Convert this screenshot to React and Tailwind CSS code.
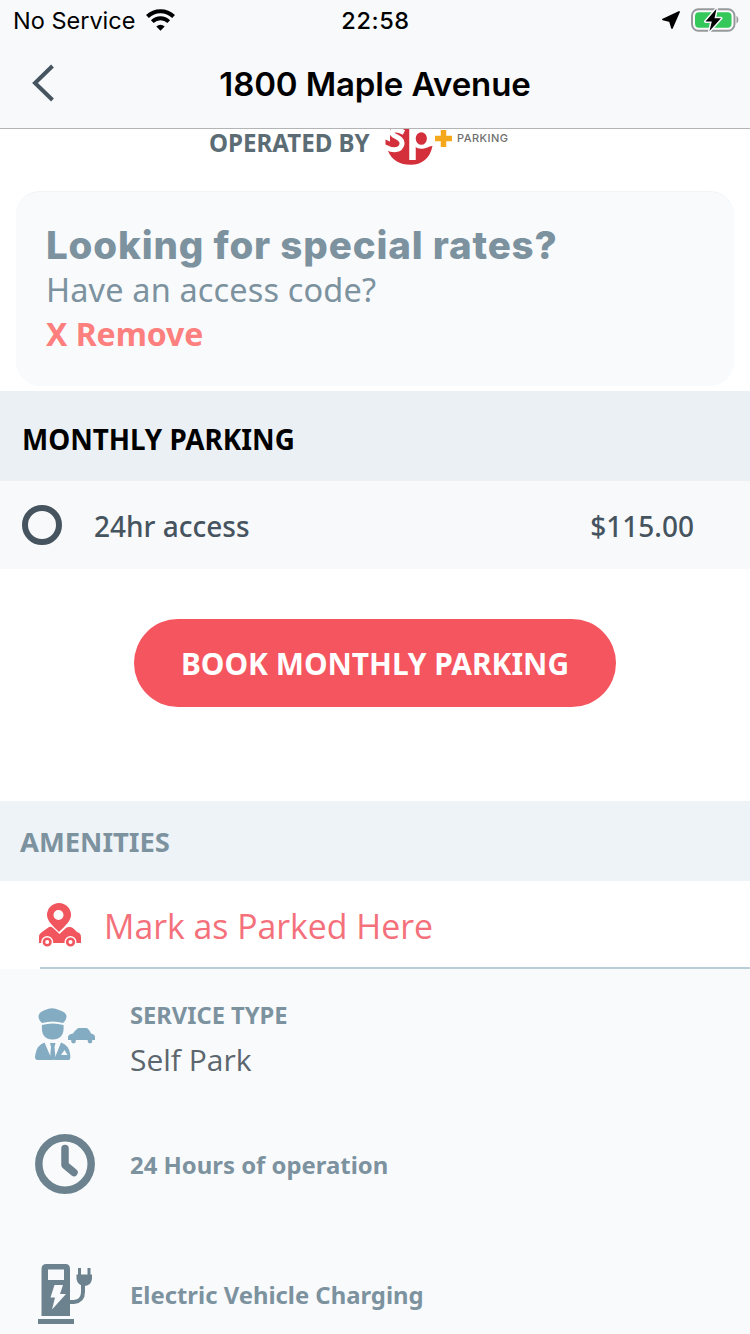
const NOTO = "font-['Noto_Sans',sans-serif]";

function T({ className, children }) {
  return <span className={`block whitespace-nowrap ${className}`}>{children}</span>;
}

function StatusBar() {
  return (
    <div className="flex h-10 items-center font-['Inter',sans-serif] text-black">
      <div className="flex flex-1 items-center pl-[13px]">
        <T className="pt-px text-[23.5px]">No Service</T>
        <svg className="ml-[11px] h-[22px] w-[29px]" viewBox="0 0 30 22" fill="none" stroke="#000">
          <path d="M1.5 7.4a19.5 19.5 0 0 1 27 0" strokeWidth="4.200" />
          <path d="M6.5 12.6a12.3 12.3 0 0 1 17 0" strokeWidth="4" />
          <path d="M15 22l-4.3-4.3a6.2 6.2 0 0 1 8.6 0z" fill="#000" stroke="none" />
        </svg>
      </div>
      <T className="-ml-px pt-px text-[23.5px] font-medium tracking-[0.6px]">22:58</T>
      <div className="flex flex-1 items-center justify-end pr-[11px]">
        <svg className="mr-[11px] h-[18px] w-[18px]" viewBox="0 0 18 18">
          <path d="M17 1L10 17 8 10.200 1 8.500z" fill="#000" stroke="#000" strokeWidth="1.800" strokeLinejoin="round" />
        </svg>
        <svg className="h-[24px] w-[48px]" viewBox="0 0 48 24">
          <rect x="1" y="1.2" width="42.5" height="21.6" rx="6.5" fill="none" stroke="#98999c" strokeWidth="2" />
          <rect x="4" y="4.2" width="36.5" height="15.6" rx="4" fill="#34c759" />
          <path d="M45.5 8c2.4 1.2 2.4 6.2 0 7.4z" fill="#98999c" />
          <path d="M25.5.8L14.5 13.4h6.3L18.5 23 30 10.3h-6.5z" fill="#000" stroke="#f8f9fc" strokeWidth="3" paintOrder="stroke" strokeLinejoin="round" />
        </svg>
      </div>
    </div>
  );
}

function Logo() {
  return (
    <svg className="ml-[14px] h-[40px] w-[125px]" viewBox="0 0 125 40">
      <path d="M6 0h34v18l8.500-1C46 30 37 35.800 27 35.800 15 35.800 8 31 4 22l2-7z" fill="#d4303c" />
      <path d="M20 3.500Q11-1 8 2.500C6 8 19 7 18 15 16.500 22 9 21.500 3 19" fill="none" stroke="#fff" strokeWidth="5" />
      <path d="M1.500 10.500q5 3 10 3.500 2 1.500 0 2.500Q6 18 1.500 15.500z" fill="#d4303c" />
      <path d="M28.500-2v33" stroke="#fff" strokeWidth="6.500" />
      <path d="M26-2h21q2.500 5 2 14-1 6-9 7.500-6 1-9-2z" fill="#fff" />
      <ellipse cx="37.300" cy="9.500" rx="5.600" ry="6.300" fill="#d4303c" />
      <path d="M59.500 1v17M51 9.500h17" stroke="#f5a81c" strokeWidth="5.500" />
      <text x="73" y="13.300" fontFamily="Inter" fontSize="11" fontWeight="500" textLength="51" fill="#6e6e6e">PARKING</text>
    </svg>
  );
}

function ParkedIcon() {
  return (
    <svg className="h-[45px] w-[42px]" viewBox="0 0 42 45">
      <path d="M0 40v-7q0-2 3-4l7-5q2-1 4 1l6.500 6 6.500-6q1-1 3-1h1q2 0 4 2l3 3q4 1 4 5v6z" fill="#f1555e" />
      <path d="M20 0a12 12 0 0 1 12 12c0 6-6 11-12 17C14 23 8 18 8 12A12 12 0 0 1 20 0z" fill="#f1555e" stroke="#fff" strokeWidth="1.400" paintOrder="stroke" />
      <circle cx="19.500" cy="12" r="5" fill="#fff" />
      <g fill="#f1555e" stroke="#fff" strokeWidth="1.400">
        <circle cx="8.200" cy="39" r="5.300" /><circle cx="31.500" cy="39" r="5.300" />
      </g>
      <circle cx="8.200" cy="39" r="2" fill="#fff" /><circle cx="31.500" cy="39" r="2" fill="#fff" />
    </svg>
  );
}

function ValetIcon() {
  return (
    <svg className="h-[52px] w-[60px]" viewBox="0 0 60 52" fill="#83abc1">
      <path d="M3.500 8Q4 4 10 2q7-3.500 14 0 7 2 7.500 6 0 4-3.500 7-10-3-21 0-3.500-3-3.500-7z" />
      <path d="M7 17q10.500-3 21.500 0 1.500 14-11 14.500Q5.500 31 7 17z" />
      <path d="M9.500 34.500L17 52H2q-3 0-1.500-6Q2 37 9.500 34.500zM26 34.500q8 3 9 11 1 6-1 6.500H19z" />
      <path d="M15 35h5.500l-1 4 1 11-2 2h-1.500l-2-2 1-11z" />
      <path d="M26 47l3.500-5 3 5z" fill="#f9fafc" />
      <path d="M33 32v-3.500q1-2.500 5-3 4-5.500 6-5.500h7q2.500 0 5 5.500 4 1 4 3.500v3z" />
      <circle cx="38.500" cy="33" r="2.400" /><circle cx="55" cy="33" r="2.400" />
    </svg>
  );
}

function ClockIcon() {
  return (
    <svg className="h-[60px] w-[60px]" viewBox="0 0 60 60" fill="none" stroke="#6c838f" strokeWidth="7.500">
      <circle cx="30" cy="30" r="26.200" />
      <path d="M30 14.500V31l9 7.500" strokeLinecap="round" strokeLinejoin="round" />
    </svg>
  );
}

function ChargerIcon() {
  return (
    <svg className="h-[60px] w-[60px]" viewBox="0 0 60 60" fill="#6c838f">
      <path d="M6.500 52V5q0-5 5-5h19q4.500 0 4.500 5v47zM3 55h36v5H3z" />
      <path d="M13 5.500h16V16H13z" fill="#f9fafc" />
      <path d="M19.500 21h8.500l-3 9h6L17 45.500l3-12h-4.500z" fill="#f9fafc" />
      <path d="M35 38h4q9-1 9-10v-7" fill="none" stroke="#6c838f" strokeWidth="4" />
      <path d="M44.500 4v9M54 4v9" fill="none" stroke="#6c838f" strokeWidth="3" />
      <path d="M41.500 10.500H57V15q-1 7-8 7-6.500-1-7.500-7z" />
    </svg>
  );
}

export default function App() {
  return (
    <div className={`flex h-[1334px] w-[750px] flex-col overflow-hidden bg-white ${NOTO}`}>
      <header className="h-[129px] shrink-0 border-b border-[#b2b4b6] bg-[#f8f9fb]">
        <StatusBar />
        <div className="grid h-[88px] grid-cols-[75px_1fr_75px] items-center">
          <svg className="-mt-[3px] ml-[32px] h-[38px] w-[23px]" viewBox="0 0 23 38">
            <path d="M20.500 2L3 19l17.500 17" fill="none" stroke="#45545e" strokeWidth="4" />
          </svg>
          <T className="pt-[2px] text-center font-['Inter',sans-serif] text-[33px] font-semibold tracking-[-0.12px] text-black">1800 Maple Avenue</T>
        </div>
      </header>
      <div className="flex h-[62px] shrink-0 items-start pl-[209px]">
        <T className="text-[24.100px] font-bold leading-[27px] text-[#5c6c74]">OPERATED BY</T>
        <Logo />
      </div>
      <section className="mx-4 h-[195px] shrink-0 rounded-[24px] border-t border-[#f1f3f5] bg-[#f9fafc] px-[30px] pt-[30px]">
        <T className="font-['Inter',sans-serif] text-[38.500px] font-extrabold leading-[46px] tracking-[0.85px] text-[#7c929f]">Looking for special rates?</T>
        <T className="text-[32.500px] leading-[44px] tracking-[0.14px] text-[#7c929f]">Have an access code?</T>
        <T className="text-[32px] font-bold leading-[44px] tracking-[-0.05px] text-[#fd807e]">X Remove</T>
      </section>
      <div className="mt-[5px] flex h-[90px] shrink-0 items-center bg-[#ebf0f5] pl-[22px] pt-[5px]">
        <T className="text-[27.800px] font-bold leading-[36px] text-black">MONTHLY PARKING</T>
      </div>
      <div className="flex h-[88px] shrink-0 items-center bg-[#f8f9fb] pl-[22px] pr-[56px] text-[#45545e]">
        <span className="h-10 w-10 rounded-full border-[6px] border-[#45545e]" />
        <T className="ml-8 flex-1 pt-px text-[28px] font-medium">24hr access</T>
        <T className="pt-px text-[28px] font-medium">$115.00</T>
      </div>
      <div className="flex h-[232px] shrink-0 justify-center pt-[50px]">
        <button className="h-[88px] w-[482px] rounded-full bg-[#f4555f] pt-[2px] text-[29.900px] font-bold text-white">
          <T className="">BOOK MONTHLY PARKING</T>
        </button>
      </div>
      <div className="flex h-20 shrink-0 items-center bg-[#eef3f7] pl-5 pt-[2px]">
        <T className="text-[27.400px] font-bold text-[#7c929f]">AMENITIES</T>
      </div>
      <div className="flex h-[88px] shrink-0 flex-col">
        <div className="flex h-[86px] items-center pl-[39px] pt-[3px]">
          <ParkedIcon />
          <T className="ml-[23px] pt-px font-['Open_Sans',sans-serif] text-[33.800px] text-[#f4707a]">Mark as Parked Here</T>
        </div>
        <div className="ml-10 h-[2px] shrink-0 bg-[#b9cdd9]" />
      </div>
      <div className="flex-1 bg-[#f9fafc] pl-[35px] text-[#7c929f]">
        <div className="flex h-[130px] items-center gap-[35px]">
          <ValetIcon />
          <div className="pt-[13px]">
            <T className="text-[23.700px] font-bold leading-[32px]">SERVICE TYPE</T>
            <T className="mt-[7px] font-['Open_Sans',sans-serif] text-[30px] leading-[44px] text-[#5c666e]">Self Park</T>
          </div>
        </div>
        <div className="flex h-[130px] items-center gap-[35px]">
          <ClockIcon />
          <T className="pt-[2px] text-[23.900px] font-bold">24 Hours of operation</T>
        </div>
        <div className="flex h-[130px] items-center gap-[35px]">
          <ChargerIcon />
          <T className="pt-[3px] text-[23.850px] font-bold">Electric Vehicle Charging</T>
        </div>
      </div>
    </div>
  );
}
